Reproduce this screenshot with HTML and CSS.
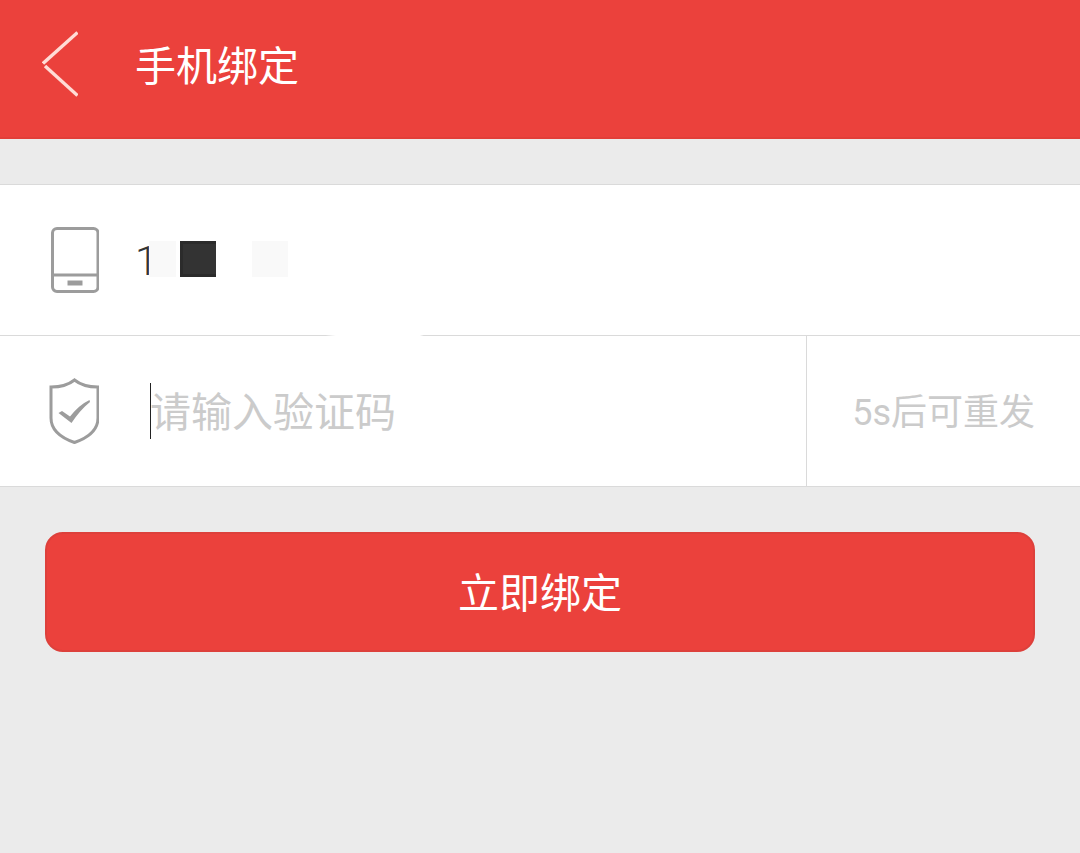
FILE: index.html
```html
<!DOCTYPE html>
<html lang="zh-CN">
<head>
<meta charset="utf-8">
<meta name="viewport" content="width=device-width, initial-scale=1">
<title>手机绑定</title>
<link rel="stylesheet" href="styles.css">
</head>
<body>
<header class="topbar">
  <button class="back" type="button" aria-label="返回">
    <svg width="36" height="66" viewBox="0 0 36 66" fill="none" stroke="#ffdcd6" stroke-width="3.4">
      <path d="M35.500 1.500 1 32.5"/><path d="M3 35 35.500 64.500"/>
    </svg>
  </button>
  <h1 class="title">手机绑定</h1>
</header>
<main>
  <form class="form">
    <div class="fields">
      <div class="row row-phone">
        <svg class="icon" width="50" height="68" viewBox="0 0 50 68" fill="none" stroke="#9c9c9c" stroke-width="3">
          <rect x="3.5" y="2.5" width="45.500" height="63" rx="4.5"/>
          <path d="M3.5 49H48.5"/><path d="M18.500 57H33.500" stroke-width="5"/>
        </svg>
        <div class="number"><span class="digit">1</span><span class="mask mask-first"></span><span class="mask mask-dark"></span><span class="mask mask-last"></span></div>
      </div>
      <div class="row row-code">
        <svg class="icon" width="50" height="68" viewBox="0 0 50 68" fill="none" stroke="#9c9c9c" stroke-width="3">
          <path d="M25.500 3C20 7.500 12 10 2 10V41C2 52 11 60.500 25.500 65.500C40 60.500 49 52 49 41V10C39 10 31 7.500 25.500 3Z"/>
          <path fill="#9c9c9c" stroke="none" d="M9.500 36 13 34 21 39.500C27 32 33 26.500 40.500 23L41 25C34 30.500 28 37.500 22.500 46Z"/>
        </svg>
        <div class="entry">
          <input class="code" type="text" inputmode="numeric" placeholder="请输入验证码" aria-label="验证码">
        </div>
        <button class="resend" type="button" disabled>5s后可重发</button>
      </div>
    </div>
    <button class="submit" type="button">立即绑定</button>
  </form>
</main>
</body>
</html>
```
FILE: styles.css
```css
* { box-sizing: border-box; }

body {
  margin: 0;
  min-height: 100vh;
  background: #ebebeb;
  font-family: Roboto, "Noto Sans CJK SC", sans-serif;
  font-size: 41px;
  color: #333;
}

button, input {
  margin: 0;
  padding: 0;
  border: 0;
  background: none;
  font: inherit;
}

.topbar {
  display: flex;
  align-items: center;
  height: 139px;
  padding: 0 42px 4px;
  background: #eb413c;
  border-bottom: 2px solid #e23e38;
}

.back {
  display: flex;
  width: 93px;
  padding-bottom: 6px;
}

.title {
  margin: 0;
  font-size: 41px;
  line-height: 60px;
  font-weight: 400;
  color: #fff;
}

.fields {
  margin-top: 45px;
  background: #fff;
  border-top: 1px solid #dadada;
  border-bottom: 1px solid #dadada;
}

.row {
  display: flex;
  align-items: center;
  height: 150px;
  padding-left: 49px;
}

.row-phone {
  height: 151px;
  border-bottom: 1px solid;
  border-image: linear-gradient(to right, #dadada 326px, #fff 336px, #fff 420px, #dadada 424px) 1;
}

.icon { flex: none; }

.number {
  display: flex;
  align-items: center;
  margin-left: 36px;
  padding-bottom: 2px;
}

.digit {
  margin-right: -9px;
  padding-top: 4px;
  line-height: 48px;
  font-weight: 300;
}

.mask {
  position: relative;
  width: 36px;
  height: 36px;
  background: #f9f9f9;
}

.mask-first { width: 27px; }

.mask-dark {
  margin: 0 36px 0 4px;
  background: #333;
  border: 3px solid #2b2b2b;
  border-right: 0;
}

.entry {
  position: relative;
  flex: 1;
  min-width: 0;
  margin-left: 51px;
}

.entry::before {
  content: "";
  position: absolute;
  top: 2px;
  bottom: 2px;
  left: 0;
  width: 1px;
  background: #222;
}

.code {
  display: block;
  width: 100%;
  height: 60px;
  padding-top: 4px;
  outline: 0;
}

.code::placeholder {
  color: #cbcbcb;
  opacity: 1;
}

.resend {
  align-self: stretch;
  padding: 0 45px 4px;
  border-left: 1px solid #dadada;
  font-size: 36px;
  color: #cbcbcb;
}

.form {
  display: flex;
  flex-direction: column;
}

.submit {
  height: 120px;
  margin: 45px;
  padding-bottom: 4px;
  border: 2px solid #dd403b;
  border-radius: 18px;
  background: #eb413c;
  color: #fff;
}
```
